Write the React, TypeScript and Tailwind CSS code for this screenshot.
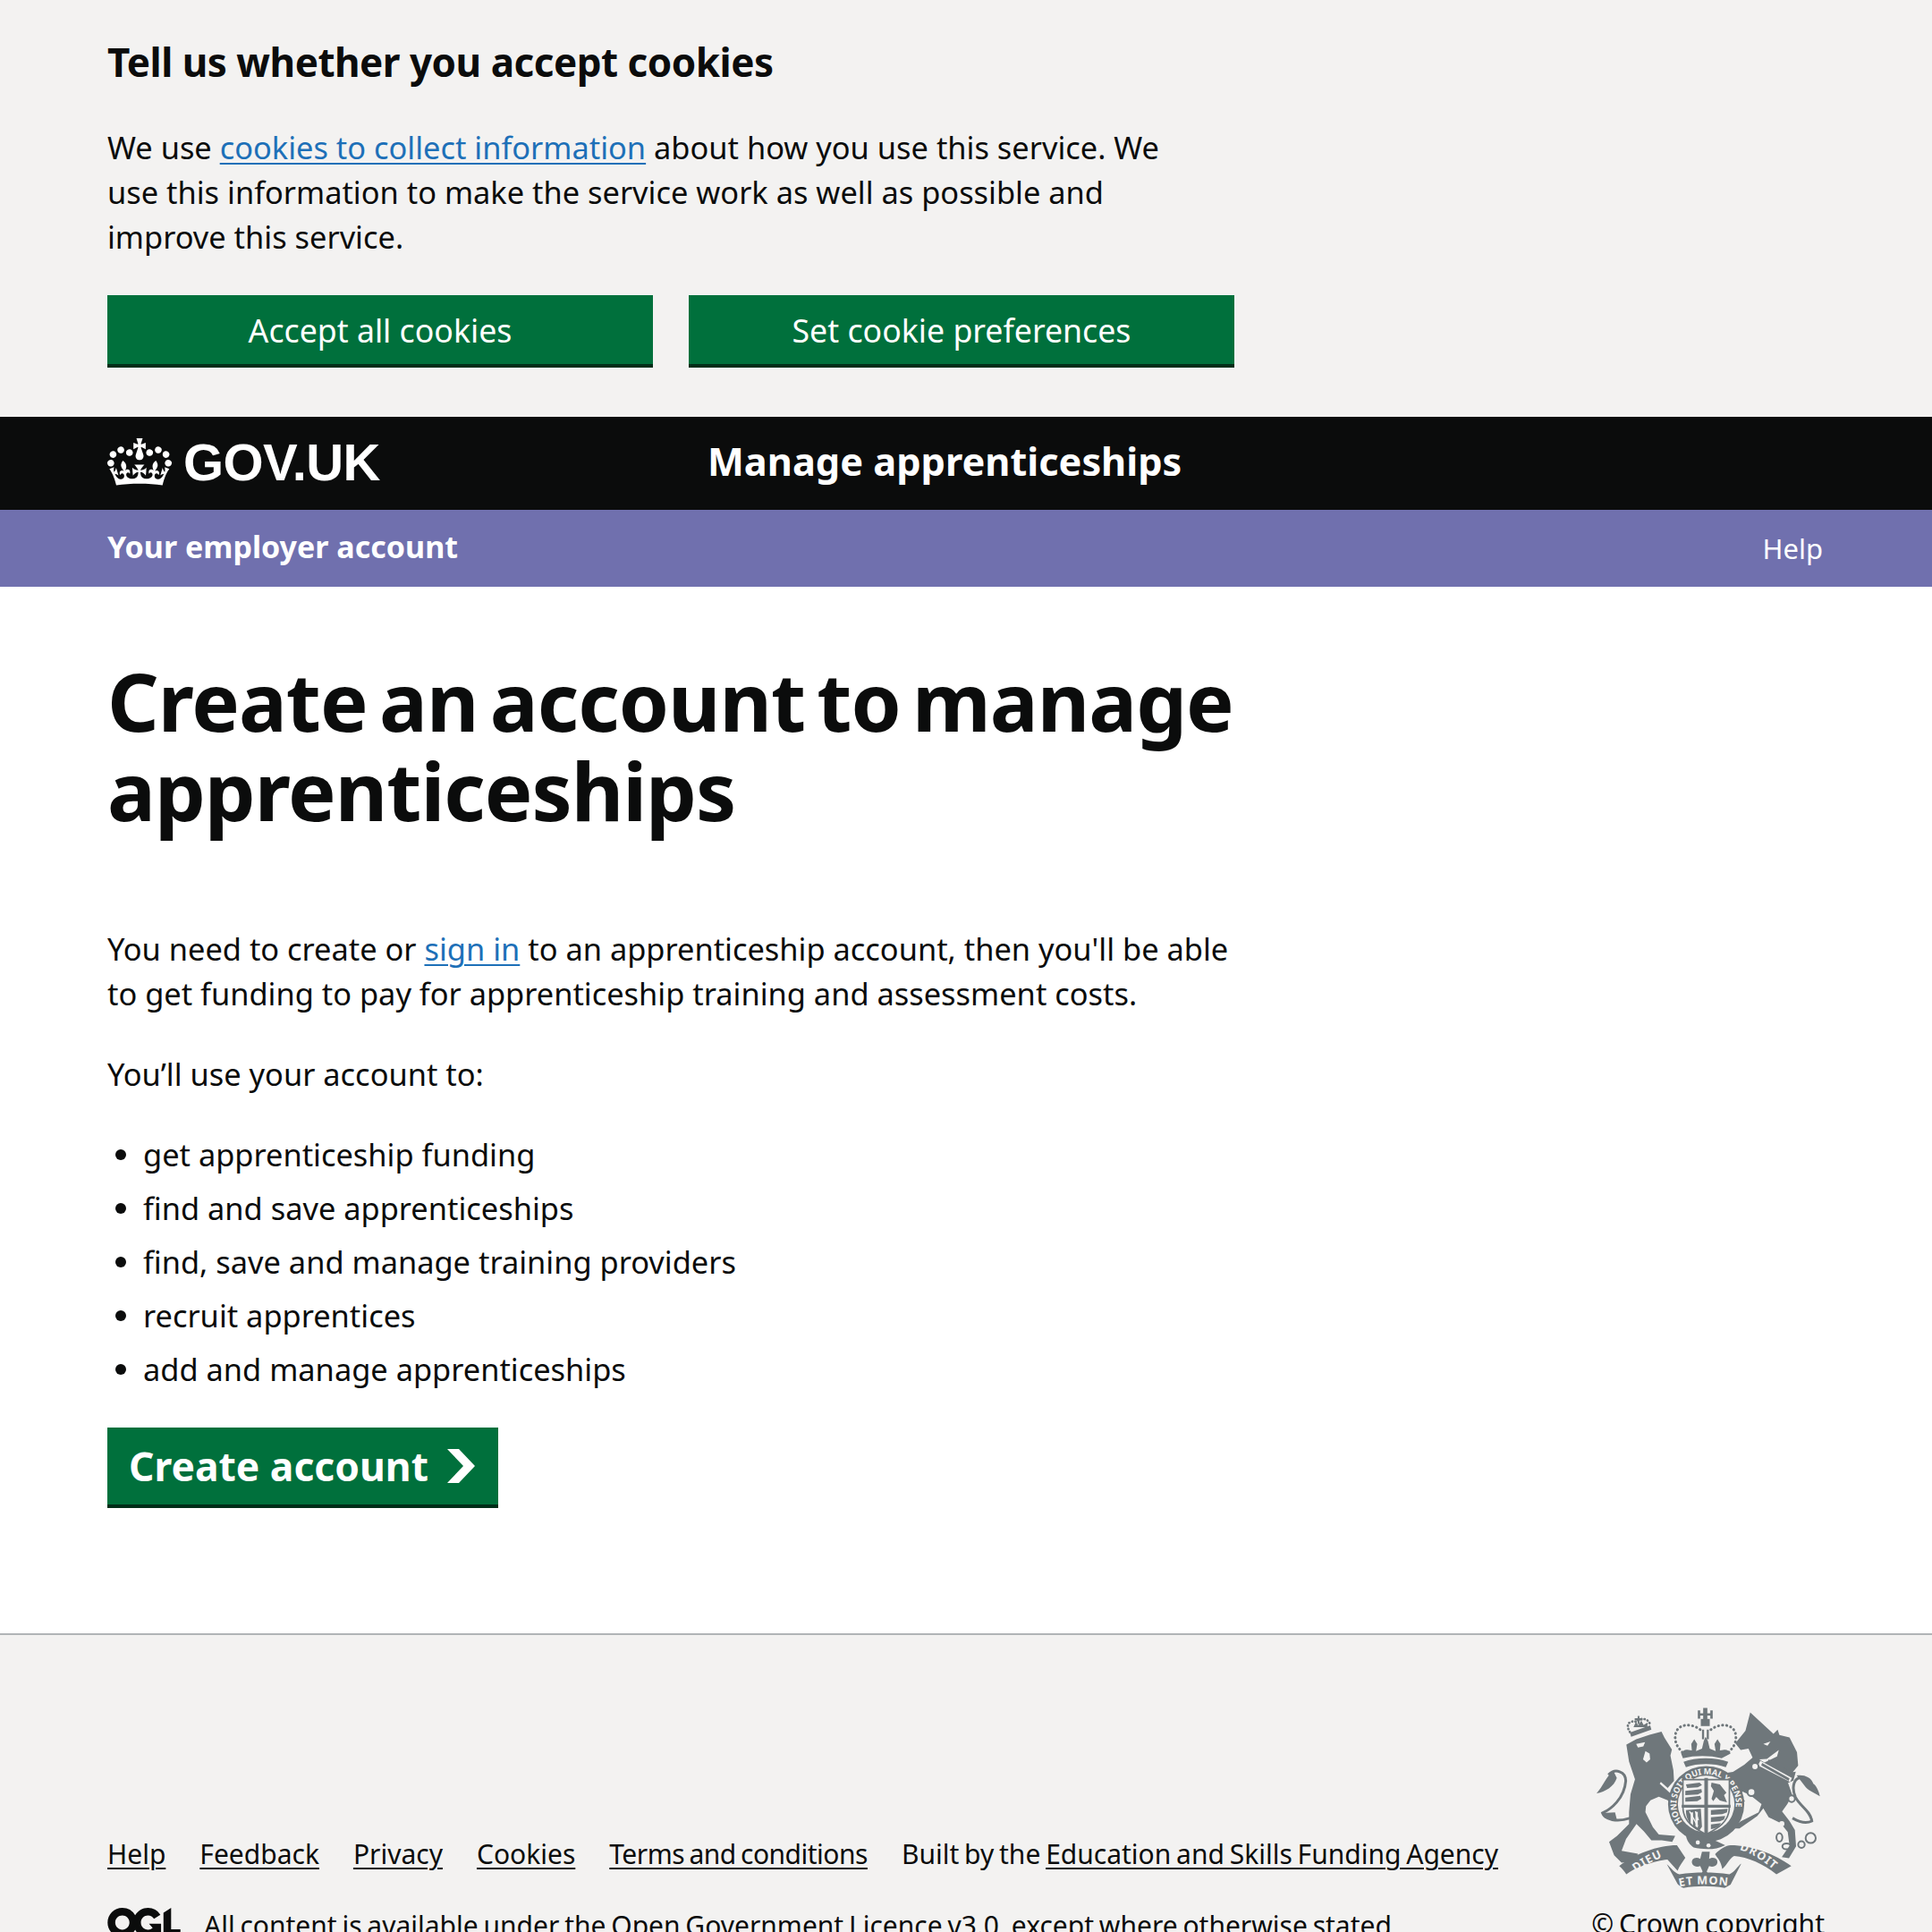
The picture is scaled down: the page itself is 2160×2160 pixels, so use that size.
const CROWN =
  "M25 30.2c3.5 1.5 7.7-.2 9.1-3.7 1.5-3.6-.2-7.8-3.9-9.2-3.6-1.4-7.6.3-9.1 3.9-1.4 3.5.3 7.5 3.9 9zM9 39.5c3.6 1.5 7.8-.2 9.2-3.7 1.5-3.6-.2-7.8-3.9-9.1-3.6-1.5-7.6.2-9.1 3.8-1.4 3.5.3 7.5 3.8 9zM4.4 57.2c3.5 1.5 7.7-.2 9.1-3.8 1.5-3.6-.2-7.7-3.9-9.1-3.5-1.5-7.6.3-9.1 3.8-1.4 3.5.3 7.6 3.9 9.1zm38.3-21.4c3.5 1.5 7.7-.2 9.1-3.8 1.5-3.6-.2-7.7-3.9-9.1-3.6-1.5-7.6.3-9.1 3.8-1.3 3.6.4 7.7 3.9 9.1zm64.4-5.6c-3.6 1.5-7.8-.2-9.1-3.7-1.5-3.6.2-7.8 3.8-9.2 3.6-1.4 7.7.3 9.2 3.9 1.3 3.5-.4 7.5-3.9 9zm15.9 9.3c-3.6 1.5-7.7-.2-9.1-3.7-1.5-3.6.2-7.8 3.7-9.1 3.6-1.5 7.7.2 9.2 3.8 1.5 3.5-.3 7.5-3.8 9zm4.7 17.7c-3.6 1.5-7.8-.2-9.2-3.8-1.5-3.6.2-7.7 3.9-9.1 3.6-1.5 7.7.3 9.2 3.8 1.3 3.5-.4 7.6-3.9 9.1zM89.3 35.8c-3.6 1.5-7.8-.2-9.2-3.8-1.4-3.6.2-7.7 3.9-9.1 3.6-1.5 7.7.3 9.2 3.8 1.4 3.6-.3 7.7-3.9 9.1zM69.7 17.7l8.9 4.7V9.3l-8.9 2.8c-.2-.3-.5-.6-.9-.9L72.4 0H59.6l3.6 11.2c-.3.3-.6.5-.9.9l-8.8-2.8v13.1l8.8-4.7c.3.3.6.7.9.9l-5 15.4v.1c-.2.8-.4 1.6-.4 2.4 0 4.1 3.1 7.5 7 8.1h.2c.3 0 .7.1 1 .1.4 0 .7 0 1-.1h.2c4-.6 7.1-4.1 7.1-8.1 0-.8-.1-1.7-.4-2.4V34l-5.1-15.4c.4-.2.7-.6 1-.9zM66 92.8c16.9 0 32.8 1.1 47.1 3.2 4-16.9 8.9-26.7 14-33.5l-9.6-3.4c1 4.9 1.1 7.2 0 10.2-1.5-1.4-3-4.3-4.2-8.7L108.6 76c2.8-2 5-3.2 7.5-3.3-4.4 9.4-10 11.9-13.6 11.2-4.3-.8-6.3-4.6-5.6-7.9 1-4.7 5.7-5.9 8-.5 4.3-8.7-3-11.4-7.6-8.8 7.1-7.2 7.9-13.5 2.1-21.1-8 6.1-8.1 12.3-4.5 20.8-4.7-5.4-12.1-2.5-9.5 6.2 3.4-5.2 7.9-2 7.2 3.1-.6 4.3-6.4 7.8-13.5 7.2-10.3-.9-10.9-8-11.2-13.8 2.5-.5 7.1 1.8 11 7.3L80.2 60c-4.1 4.4-8 5.3-12.3 5.4 1.4-4.4 8-11.6 8-11.6H55.5s6.4 7.2 7.9 11.6c-4.2-.1-8-1-12.3-5.4l1.4 16.4c3.9-5.5 8.5-7.7 10.9-7.3-.3 5.8-.9 12.8-11.1 13.8-7.2.6-12.9-2.9-13.5-7.2-.7-5 3.8-8.3 7.1-3.1 2.7-8.7-4.6-11.6-9.4-6.2 3.7-8.5 3.6-14.7-4.6-20.8-5.8 7.6-5 13.9 2.2 21.1-4.7-2.6-11.9.1-7.7 8.8 2.3-5.5 7.1-4.2 8.1.5.7 3.3-1.3 7.1-5.7 7.9-3.5.7-9-1.8-13.5-11.2 2.5.1 4.7 1.3 7.5 3.3l-4.7-15.4c-1.2 4.4-2.7 7.2-4.3 8.7-1.1-3-.9-5.3 0-10.2l-9.5 3.4c5 6.9 9.9 16.7 14 33.5 14.8-2.1 30.8-3.2 47.7-3.2z";

const OGL =
  "M421.5 142.8V.1l-50.7 32.3v161.1h112.4v-50.7zm-122.3-9.6A47.12 47.12 0 0 1 221 97.8c0-26 21.1-47.1 47.1-47.1 16.7 0 31.4 8.7 39.7 21.8l42.7-27.2A97.63 97.63 0 0 0 268.1 0c-36.5 0-68.3 20.1-85.1 49.7A98 98 0 0 0 97.8 0C43.9 0 0 43.9 0 97.8s43.9 97.8 97.8 97.8c36.5 0 68.3-20.1 85.1-49.7a97.76 97.76 0 0 0 149.6 25.4l19.4 22.2h3v-87.8h-80l24.3 27.5zM97.8 145c-26 0-47.1-21.1-47.1-47.1s21.1-47.1 47.1-47.1 47.2 21 47.2 47S123.8 145 97.8 145";

const ARMS = "#6f777b";
const BG = "#f3f2f1";

// royal arms, drawn by hand in the coordinates of the zoomed crop
const RoyalArms = () => (
  <svg viewBox="60 45 775 630" className="w-[258px] h-[210px] shrink-0" fill={ARMS}>
    <defs>
      <path id="garter-ring" d="M360 438 A100 100 0 1 1 520 438" />
      <path id="ribbon-left" d="M204 606 Q262 562 350 536" />
      <path id="ribbon-mid" d="M350 655 Q436 636 570 662" />
      <path id="ribbon-right" d="M552 532 Q620 548 710 640" />
    </defs>

    {/* lion */}
    <path d="M172 178l33-18 45-15 40-10 10 20 25 40-5 20 10 50 2 35-22 25 20 25 15 20 15 40-15 5-12-16-22-34-30-12-28 12-15 20-2 20 25 50 20 25 55 5-10 20-35-5-35 0-25-30-25-25-35 50-15 40 55 10-10 25-45 5-25-25-17-45 27-20 40-40 0-40 5-60 15-50-20-60z" />
    <path d="M205 176l30-6-6 14-18 4zM236 200l14 8 2 20-12 10-12-10z" fill={BG} />
    <path d="M288 304l54 48-6 4-52-46z" fill={BG} />
    {/* lion tail */}
    <path d="M185 425C140 440 100 430 92 408 120 395 165 360 170 300 170 270 135 255 112 280" fill="none" stroke={ARMS} strokeWidth="9" />
    <path d="M90 408c10 14 30 22 50 22l-6-24z" />
    <path d="M128 266C105 285 92 320 72 342c30-6 58-22 68-52z" />
    {/* lion crown */}
    <g fill="none" stroke={ARMS} strokeWidth="8" strokeDasharray="1 10" strokeLinecap="round">
      <path d="M184 136c-18-28 2-40 22-34 16-18 44-10 46 12" />
    </g>
    <path d="M184 138l68-24 4 14-68 24z" />
    <path d="M196 120l8-18 8 12 10-16 8 14 14-8-2 16z" />
    <path d="M200 90h10v-8h6v8h10v7h-10v12h-6V97h-10z" />

    {/* unicorn */}
    <path d="M588 70l78 72 14-14 6 18 34 8 25 50 4 45-18 22 10-2-8 30-18 8 14 40-16 30-18 26 25 32 18 30 4 55-24 40-24-4 26-38-6-46-24-30-40-20-18-30-20 26-60 42-24 0 28-24 60-30 10-28-38-30-26-12-6 8 14 24-12 14-34-44-44-34-34-24 14-24 30 20 40-6 38-24 28-24-14-30-26 4-18-22 34-42z" />
    <path d="M632 176l24-8-10 14zM618 228l26-2 40-30-6 22-42 20z" fill={BG} />
    <path d="M622 232l106 58-6 14-108-56z" fill={BG} />
    <path d="M628 240l92 52-3 8-92-52zM646 240l4-12 9 6-2 12zM672 254l4-12 9 6-2 12zM698 268l4-12 9 6-2 12z" />
    <circle cx="604" cy="252" r="12" fill={BG} stroke={ARMS} strokeWidth="6" />
    <circle cx="592" cy="338" r="13" fill={BG} stroke={ARMS} strokeWidth="6" />
    <circle cx="727" cy="360" r="11" fill={BG} stroke={ARMS} strokeWidth="6" />
    <circle cx="716" cy="408" r="9" fill={BG} />
    <circle cx="694" cy="444" r="9" fill={BG} />
    <g fill="none" stroke={ARMS} strokeWidth="6">
      <ellipse cx="686" cy="490" rx="10" ry="14" />
      <ellipse cx="710" cy="520" rx="14" ry="10" />
      <circle cx="760" cy="514" r="11" />
      <circle cx="791" cy="492" r="17" />
    </g>
    {/* unicorn tail */}
    <path d="M765 290C735 285 725 320 740 355 755 385 790 400 795 435 775 445 755 440 730 425" fill="none" stroke={ARMS} strokeWidth="9" />
    <path d="M744 282c24-4 50 6 56 28 10 6 18 24 22 42-18-12-40-18-52-36z" />

    {/* crown over the shield */}
    <path d="M430 55h14v18h10v-10h8v28h-8V81h-10v14h-14V81h-10v10h-8V63h8v10h10z" />
    <path d="M422 92h30v24h-30z" />
    <g fill="none" stroke={ARMS} strokeWidth="9" strokeDasharray="1 13" strokeLinecap="round">
      <path d="M420 128c-30-24-84-22-84 26 0 24 12 36 24 50" />
      <path d="M456 128c30-24 84-22 84 26 0 24-12 36-24 50" />
    </g>
    <path d="M426 128h7v32h-7zM442 128h7v32h-7z" />
    <path d="M356 208c10-16 16-14 36-10l-2-22 10-16 10 16-4 24 20-8 6-26 6-14 8 14 6 26 20 8-4-24 10-16 10 16-2 22c20-4 26-6 36 10l-30 16c-40-10-90-10-130 0z" />
    <path d="M364 236c40-16 108-16 150 0l-8 18c-40-14-94-14-134 0z" />

    {/* garter and shield */}
    <circle cx="440" cy="378" r="128" />
    <circle cx="440" cy="378" r="95" fill={BG} />
    <text fontFamily="'Noto Sans', sans-serif" fontSize="28" fontWeight="700" fill={BG}>
      <textPath href="#garter-ring">HONI SOIT QUI MAL Y PENSE</textPath>
    </text>
    <path d="M362 296h156v92c0 50-40 72-78 92-38-20-78-42-78-92z" fill={BG} stroke={ARMS} strokeWidth="5" />
    <path d="M434 290h12v190h-12zM358 380h164v10H358z" />
    <path d="M372 312l46-6 8 8-14 8-36 2zM370 334l54-6 2 10-14 8-42 2zM370 356l50-6 4 10-14 8-40 2z" />
    <path d="M458 306l28 6 22 28-8 8 10 24-24-6-12-12-10 14-6-8 8-26-10-16z" />
    <path d="M372 398l50-4 4 60-10 14c-30-16-44-40-44-70zM388 406v36l8 8v-44zM404 404v48l8 6v-54z" />
    <path d="M456 398l56-4-2 12-16 6-38 2zM456 422l48-4-4 12-14 6-30 2zM456 446l34-4-8 12-14 6-12 2z" />
    <path d="M384 402l28 50M404 402l10 30" stroke={BG} strokeWidth="4" fill="none" />

    {/* buckle */}
    <path d="M372 482c40-4 90 12 132 34-34 18-76 14-106 8-14-10-24-24-26-42z" />
    <circle cx="412" cy="507" r="7" fill={BG} />
    <circle cx="448" cy="517" r="7" fill={BG} />

    {/* motto ribbons */}
    <path d="M148 586c50-40 130-70 194-70l28 42c-10 16-20 28-26 44l-34-38c-40 4-110 26-138 50-8-12-14-20-24-28z" />
    <path d="M522 516c70 0 150 30 204 70l-50 28c-44-36-96-58-142-62-14 6-24 30-40 44-4-26-14-34-24-50 14-16 38-30 52-30z" />
    <path d="M308 580c14 12 24 28 42 34 56-8 112-8 168 0 18-8 26-26 40-36l-36 70c-10 6-14 8-20 12-46-8-92-8-138 0-8-4-14-8-20-14z" />
    <path d="M426 538h26l-2 24c16-10 34 2 26 18-6 8-16 10-26 6l-8 18 4 8c-6 6-16 6-22 0l4-8-8-18c-10 4-20 2-26-6-8-16 10-28 26-18z" />
    <g fontFamily="'Noto Sans', sans-serif" fontSize="38" fontWeight="700" fill={BG} letterSpacing="3">
      <text>
        <textPath href="#ribbon-left">DIEU</textPath>
      </text>
      <text>
        <textPath href="#ribbon-mid">ET MON</textPath>
      </text>
      <text>
        <textPath href="#ribbon-right">DROIT</textPath>
      </text>
    </g>
  </svg>
);

const Link = ({ children }: { children: React.ReactNode }) => (
  <a href="#" className="text-[#1d70b8] underline underline-offset-[4px] decoration-2">
    {children}
  </a>
);

const FooterLink = ({ children }: { children: React.ReactNode }) => (
  <a href="#" className="underline underline-offset-[4px] decoration-2">
    {children}
  </a>
);

const listItems = [
  "get apprenticeship funding",
  "find and save apprenticeships",
  "find, save and manage training providers",
  "recruit apprentices",
  "add and manage apprenticeships",
];

export default function App() {
  return (
    <div className="h-[2160px] overflow-hidden bg-white text-[#0b0c0c] font-['Noto_Sans',sans-serif] text-[34.4px] leading-[50px]">
      {/* cookie banner */}
      <div className="h-[466px] bg-[#f3f2f1] px-[120px] pt-[39px]">
        <h2 className="text-[44px] leading-[60px] font-bold tracking-[-0.5px]">Tell us whether you accept cookies</h2>
        <p className="mt-[41px] w-[1260px]">
          We use <Link>cookies to collect information</Link> about how you use this service. We
          <br />
          use this information to make the service work as well as possible and
          <br />
          improve this service.
        </p>
        <div className="mt-[40px] flex gap-[40px]">
          <button className="w-[610px] h-[81px] bg-[#00703c] border-b-4 border-[#002d18] text-white text-[35.7px]">Accept all cookies</button>
          <button className="w-[610px] h-[81px] bg-[#00703c] border-b-4 border-[#002d18] text-white text-[35.7px]">Set cookie preferences</button>
        </div>
      </div>

      {/* header */}
      <header className="h-[104px] bg-[#0b0c0c] px-[120px] flex items-center text-white">
        <div className="w-[671px] flex items-center gap-[13px]">
          <svg viewBox="0 0 132 97" className="w-[72px] h-[53px] mb-[3px]" fill="currentColor">
            <path d={CROWN} />
          </svg>
          <span className="font-['Liberation_Sans',sans-serif] font-bold text-[58px] tracking-[-0.6px] pb-[2px]">GOV.UK</span>
        </div>
        <span className="text-[43.3px] font-bold pb-[5px]">Manage apprenticeships</span>
      </header>

      {/* account bar */}
      <div className="h-[86px] bg-[#7070ae] px-[120px] flex items-center justify-between text-white">
        <span className="text-[34px] font-bold pb-[4px]">Your employer account</span>
        <a href="#" className="mr-[2px] text-[31px]">Help</a>
      </div>

      {/* main content */}
      <main className="h-[1170px] px-[120px] pt-[77px]">
        <h1 className="text-[90px] leading-[100px] font-bold tracking-[-1px] [word-spacing:-9px]">
          Create an account to manage
          <br />
          apprenticeships
        </h1>
        <p className="mt-[103px]">
          You need to create or <Link>sign in</Link> to an apprenticeship account, then you'll be able
          <br />
          to get funding to pay for apprenticeship training and assessment costs.
        </p>
        <p className="mt-[40px]">You’ll use your account to:</p>
        <ul className="mt-[40px] flex flex-col gap-[10px]">
          {listItems.map((item) => (
            <li key={item} className="flex items-center">
              <span className="w-[12px] h-[12px] ml-[9px] mr-[19px] rounded-full bg-[#0b0c0c]" />
              {item}
            </li>
          ))}
        </ul>
        <button className="mt-[40px] h-[90px] w-[437px] bg-[#00703c] border-b-4 border-[#002d18] text-white text-[44.4px] font-bold flex items-center justify-between pl-[24px] pr-[26px]">
          Create account
          <svg viewBox="0 0 31 38" className="w-[31px] h-[38px]" fill="currentColor">
            <path d="M0 0h13l18 19-18 19H0l18-19z" />
          </svg>
        </button>
      </main>

      {/* footer */}
      <footer className="h-[334px] bg-[#f3f2f1] border-t-2 border-[#b1b4b6] pl-[120px] pr-[120px] pt-[78px] flex justify-between text-[30px] leading-[40px] [word-spacing:-2px]">
        <div className="pt-[147px]">
          <div className="flex gap-[38px]">
            <FooterLink>Help</FooterLink>
            <FooterLink>Feedback</FooterLink>
            <FooterLink>Privacy</FooterLink>
            <FooterLink>Cookies</FooterLink>
            <span className="tracking-[-0.5px] [word-spacing:-2px]">
              <FooterLink>Terms and conditions</FooterLink>
            </span>
            <span>
              Built by the <FooterLink>Education and Skills Funding Agency</FooterLink>
            </span>
          </div>
          <div className="mt-[40px] flex gap-[26px] items-start">
            <svg viewBox="0 0 483.2 195.87" className="w-[82px] h-[33px] shrink-0" fill="#0b0c0c">
              <path d={OGL} />
            </svg>
            <span>All content is available under the Open Government Licence v3.0, except where otherwise stated</span>
          </div>
        </div>
        <div className="flex flex-col items-center">
          <RoyalArms />
          <span className="mt-[15px]">© Crown copyright</span>
        </div>
      </footer>
    </div>
  );
}
